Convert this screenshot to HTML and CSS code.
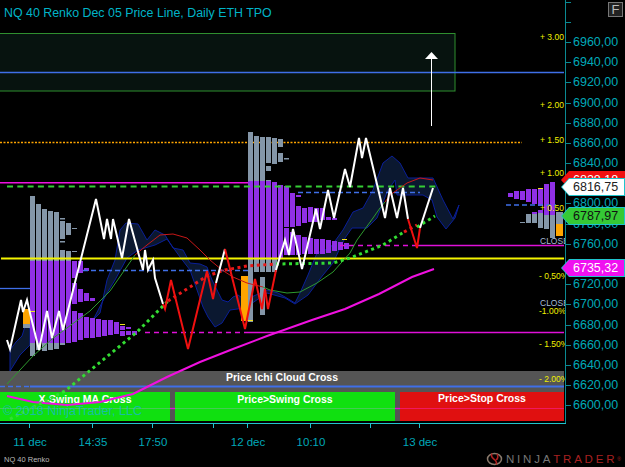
FILE: index.html
```html
<!DOCTYPE html>
<html lang="en">
<head>
    <meta charset="UTF-8">
    <title>NQ 40 Renko</title>
    <link rel="stylesheet" href="styles.css">
</head>
<body>
<div class="screen">
    <div class="chart-row">
        <div class="title">NQ 40 Renko Dec 05 Price Line, Daily ETH TPO</div>
        <div class="f-button">F</div>

        <!-- Plot area -->
        <svg class="plot" viewBox="0 0 565 423" width="565" height="423">
            <!-- target zone -->
            <rect class="zone" x="-2" y="33.5" width="457" height="57.5"/>

            <!-- bottom bands -->
            <rect class="band-grey" x="0" y="371" width="564" height="50"/>
            <rect class="band-green" x="0" y="392" width="170" height="29"/>
            <rect class="band-green" x="175" y="392" width="220" height="29"/>
            <rect class="band-red" x="400" y="392" width="164" height="29"/>
            <line class="faint-green" x1="0" y1="408.500" x2="170" y2="408.500"/>
            <line class="faint-green" x1="175" y1="408.500" x2="395" y2="408.500"/>
            <line class="faint-red" x1="400" y1="408.500" x2="564" y2="408.500"/>
            <line class="line-magenta-1" x1="170" y1="408.500" x2="175" y2="408.500"/>
            <line class="line-magenta-1" x1="395" y1="408.500" x2="400" y2="408.500"/>
            <text class="band-text" x="282" y="381">Price Ichi Cloud Cross</text>
            <text class="band-text" x="85" y="403">X-Swing MA Cross</text>
            <text class="band-text" x="285" y="403">Price&gt;Swing Cross</text>
            <text class="band-text" x="482" y="402">Price&gt;Stop Cross</text>

            <!-- levels behind the bars -->
            <line class="line-blue" x1="0" y1="72.500" x2="564" y2="72.500"/>
            <line class="line-orange" x1="0" y1="142.500" x2="522" y2="142.500"/>
            <line class="line-magenta" x1="0" y1="182.700" x2="248" y2="182.700"/>
            <line class="line-blue" x1="0" y1="288.500" x2="30" y2="288.500"/>

            <!-- ichimoku cloud -->
            <path class="cloud" d="M10 371V350L16 342L22 336L27 320L30 330V345L20 355Z"/>
            <path class="cloud" d="M93 320L100 313L107 280L115 260L120 230L126 223L138 224L147 240L155 230L165 235L173 248L183 250L190 263L200 264L207 267L212 280L222 300L228 302L233 297L238 295L245 300L267 290L278 293L285 297L295 303L300 293L308 275L317 253L330 248L343 230L353 212L363 208L373 190L383 163L392 156L400 163L408 178L433 178L443 200L453 219L459 205L455 218L446 229L437 217L432 200L423 195L397 195L395 180L387 192L377 218L367 228L352 228L345 238L340 248L333 263L323 275L308 295L295 304L285 298L267 293L245 308L230 310L222 323L215 327L208 317L203 307L190 270L180 257L167 239L155 245L138 250L127 258L115 280L107 293Z"/>

            <!-- profile bars -->
            <path class="bar-grey" d="M30 196h5v65h-5zM36 204h5v57h-5zM42 209h5v52h-5zM48 211h5v50h-5zM54 212h5v49h-5zM60 221h5v18h-5zM60 250h5v11h-5zM66 223h5v12h-5zM66 251h5v10h-5zM60 218h5v1.500h-5zM72 228h5v1h-5zM60 241h5v1.500h-5zM72 251h5v1h-5zM30 343h5v13h-5zM36 343h5v7h-5zM42 343h5v8h-5zM48 343h5v7h-5zM54 343h5v6h-5zM60 343h5v2h-5zM23 324h7v4h-7z"/>
            <path class="bar-purple" d="M30 261h5v82h-5zM36 261h5v82h-5zM42 261h5v82h-5zM48 261h5v82h-5zM54 261h5v82h-5zM60 261h5v82h-5zM66 261h5v82h-5zM72 261h5v17h-5zM72 283h5v21h-5zM72 311h5v31h-5zM78 261h5v12h-5zM78 289h5v13h-5zM78 313h5v27h-5zM84 268h5v3h-5zM84 293h5v8h-5zM84 317h5v21h-5zM90 298h5v3h-5zM90 318h5v20h-5zM96 319h5v18h-5zM102 320h5v16h-5zM108 320h5v15h-5zM114 322h5v12h-5zM120 326h5v4h-5zM120 331h5v5h-5zM126 327h5v2h-5zM126 331h5v4h-5zM132 331h5v4h-5z"/>
            <rect class="bar-orange" x="23" y="309" width="7" height="15"/>
            <path class="bar-grey" d="M248 132h5v49h-5zM254 136h5v45h-5zM260 137h5v44h-5zM266 137h5v26h-5zM266 166h5v5h-5zM266 180h5v1h-5zM272 138h5v26h-5zM278 139h5v8h-5zM278 153h5v9h-5zM284 158h5v1.500h-5zM248 258h5v64h-5zM254 258h5v14h-5zM260 258h5v14h-5zM266 258h5v14h-5zM272 258h5v14h-5zM260 277h5v38h-5z"/>
            <path class="bar-purple" d="M248 181h5v77h-5zM254 181h5v77h-5zM260 181h5v77h-5zM266 181h5v77h-5zM272 182h5v76h-5zM278 185h5v73h-5zM284 186h5v41h-5zM284 228h5v27h-5zM290 193h5v34h-5zM290 232h5v23h-5zM296 195h5v2h-5zM296 206h5v20h-5zM296 235h5v20h-5zM302 208h5v15h-5zM302 237h5v17h-5zM308 207h5v15h-5zM308 238h5v16h-5zM314 208h5v14h-5zM314 239h5v15h-5zM320 208h5v12h-5zM320 239h5v15h-5zM326 217h5v3h-5zM326 240h5v13h-5zM332 218h5v2h-5zM332 241h5v10h-5zM338 242h5v8h-5zM344 243h5v6h-5z"/>
            <rect class="bar-orange" x="241" y="276" width="7" height="45"/>
            <path class="bar-grey" d="M520 222h5v1h-5zM526 214h5v9h-5zM532 213h5v10h-5zM538 213h5v15h-5zM544 215h5v14h-5zM550 215h5v23h-5zM556 212h7v12h-7z"/>
            <path class="bar-purple" d="M508 193h5v4h-5zM514 191h5v8h-5zM520 191h5v9h-5zM526 189h5v13h-5zM532 189h5v15h-5zM538 189h5v17h-5zM544 184h5v31h-5zM550 182h5v33h-5zM532 212h5v2h-5zM538 210h5v3h-5z"/>
            <rect class="bar-orange" x="556" y="224" width="7" height="12"/>
            <path class="tick-yellow" d="M30 311.500h5M120 324.500h5M538 188.500h5M342 239.500h5M248 320.500h5"/>

            <!-- level lines over the bars -->
            <line class="line-green-dash" x1="7" y1="186.500" x2="437" y2="186.500"/>
            <line class="line-blue-dash" x1="298" y1="192.500" x2="420" y2="192.500"/>
            <line class="line-blue-dash" x1="506" y1="205" x2="556" y2="205"/>
            <line class="line-blue-dash" x1="83" y1="270.500" x2="248" y2="270.500"/>
            <line class="line-blue-dash" x1="0" y1="386.500" x2="30" y2="386.500"/>
            <line class="line-blue-thick" x1="30" y1="386.500" x2="564" y2="386.500"/>
            <line class="line-magenta-dash" x1="340" y1="245.500" x2="415" y2="245.500"/>
            <line class="line-magenta-1" x1="415" y1="245.500" x2="564" y2="245.500"/>
            <line class="line-magenta-dash" x1="145" y1="332.500" x2="248" y2="332.500"/>
            <line class="line-magenta-1" x1="248" y1="332.500" x2="564" y2="332.500"/>
            <line class="line-yellow" x1="1" y1="258.500" x2="564" y2="258.500"/>

            <!-- moving averages -->
            <polyline class="ma-green" points="7,384 33,356 52,339 90,311 110,291 135,255"/>
            <polyline class="ma-red" points="135,255 147,245 160,235 173,234 187,238 200,250 210,260 222,270 233,277 247,283 263,287"/>
            <polyline class="ma-green" points="263,287 270,290 287,293 300,292 317,283 333,272 350,253 357,240 373,218 380,208 385,202"/>
            <polyline class="ma-red" points="385,202 390,195 407,183 420,178 433,180"/>
            <polyline class="ma-magenta" points="7,396 33,402 67,405 100,402 133,394 167,377 200,362 233,349 267,336 312,320 345,309 379,294 412,277 434,269"/>

            <!-- swing dots -->
            <polyline class="dots-green" points="10,419 65,391 137,332 163,306 168,301"/>
            <polyline class="dots-red" points="168,301 190,287 207,276 225,270 247,266 276,264"/>
            <polyline class="dots-green" points="276,264 333,263 350,258 383,245 404,232"/>
            <polyline class="dots-red" points="404,232 417,225"/>
            <polyline class="dots-green" points="417,227 435,216"/>

            <!-- price line -->
            <polyline class="price-white" points="7,340 10,349 21,300 23,312 27,300 30,313 39,350 47,311 52,338 59,311 63,330 96,199 104,239 107,219 111,239 113,219 122,258 129,219 143,270 145,250 148,270 153,260 155,278 163,304"/>
            <polyline class="price-red" points="163,304 165,309 171,280 188,349 207,271 213,299 216,283"/>
            <polyline class="price-white" points="216,283 225,249"/>
            <polyline class="price-red" points="225,249 245,329 255,279 262,309 265,289 268,309 276,270"/>
            <polyline class="price-white" points="276,270 285,240 289,255 293,229 302,269 316,209 320,229 328,190 334,218 345,169 350,187 359,138 362,158 366,138 385,218 390,188 397,218 403,188 408,219"/>
            <polyline class="price-red" points="408,219 417,248 420,228"/>
            <polyline class="price-white" points="420,228 433,188"/>

            <!-- arrow -->
            <line class="arrow-line" x1="431.500" y1="58" x2="431.500" y2="126"/>
            <polygon class="arrow-head" points="431.500,52 438,59 425,59"/>

            <!-- percent labels -->
            <text class="pct" x="540" y="40">+ 3.00</text>
            <text class="pct" x="540" y="108">+ 2.00</text>
            <text class="pct" x="540" y="143">+ 1.50</text>
            <text class="pct" x="540" y="176">+ 1.00</text>
            <text class="pct" x="540" y="211">+ 0.50</text>
            <text class="close" x="540" y="244">CLOSE</text>
            <text class="pct" x="539" y="279">- 0,50%</text>
            <text class="close" x="540" y="306">CLOSE</text>
            <text class="pct" x="539" y="314">-1.00%</text>
            <text class="pct" x="539" y="347">- 1.50%</text>
            <text class="pct" x="539" y="382">- 2.00%</text>

            <text class="copyright" x="3" y="415">© 2018 NinjaTrader, LLC</text>
        </svg>

        <!-- Price axis -->
        <div class="price-axis">
            <div class="price-row"></div>
            <div class="price-row"></div>
            <div class="price-row">6960,00</div>
            <div class="price-row">6940,00</div>
            <div class="price-row">6920,00</div>
            <div class="price-row">6900,00</div>
            <div class="price-row">6880,00</div>
            <div class="price-row">6860,00</div>
            <div class="price-row">6840,00</div>
            <div class="price-row">6820,00</div>
            <div class="price-row">6800,00</div>
            <div class="price-row">6780,00</div>
            <div class="price-row">6760,00</div>
            <div class="price-row">6740,00</div>
            <div class="price-row">6720,00</div>
            <div class="price-row">6700,00</div>
            <div class="price-row">6680,00</div>
            <div class="price-row">6660,00</div>
            <div class="price-row">6640,00</div>
            <div class="price-row">6620,00</div>
            <div class="price-row">6600,00</div>
        </div>

        <!-- Price tags -->
        <div class="price-tag tag-red"><span>6828,18</span></div>
        <div class="price-tag tag-white"><span>6816,75</span></div>
        <div class="price-tag tag-green"><span>6787,97</span></div>
        <div class="price-tag tag-magenta"><span>6735,32</span></div>
    </div>

    <!-- Time axis -->
    <svg class="time-axis" viewBox="0 0 566 27" width="566" height="27">
        <path class="time-ticks" d="M29.500 0v4M92.500 0v4M152.500 0v4M213.500 0v4M247.500 0v4M310.500 0v4M370.500 0v4M419.500 0v4"/>
        <text class="time-label" x="30" y="22">11 dec</text>
        <text class="time-label" x="93" y="22">14:35</text>
        <text class="time-label" x="153" y="22">17:50</text>
        <text class="time-label" x="248" y="22">12 dec</text>
        <text class="time-label" x="311" y="22">10:10</text>
        <text class="time-label" x="420" y="22">13 dec</text>
    </svg>

    <footer class="footer">
        <span class="instrument">NQ 40 Renko</span>
        <div class="logo">
            <svg class="logo-mark" viewBox="0 0 17 14" width="17" height="14">
                <ellipse class="logo-ring" cx="8.500" cy="7" rx="7" ry="5.500"/>
                <path class="logo-swirl" d="M6 1.500C4 5 7 6 9 8C10.500 9.500 11 11 10 12.500"/>
                <path class="logo-swirl" d="M11 2C12.500 5 11.500 7 10 8"/>
            </svg>
            <span class="logo-ninja">NINJA</span><span class="logo-trader">TRADER</span><sup class="logo-reg">®</sup>
        </div>
    </footer>
</div>
</body>
</html>
```
FILE: styles.css
```css
/* Page */
body {
    margin: 0;
    background-color: #000;
    font-family: "Liberation Sans", Arial, sans-serif;
}

.screen {
    width: 625px;
    height: 467px;
    overflow: hidden;
    display: flex;
    flex-direction: column;
    background-color: #000;
}

.chart-row {
    position: relative;
    display: flex;
    height: 423px;
    border-bottom: 1px solid #1fc4cc;
    box-sizing: content-box;
    margin-right: 59px;
}

.title {
    position: absolute;
    left: 4px;
    top: 6px;
    font-size: 12.400px;
    color: #00b4c8;
    white-space: nowrap;
}

.f-button {
    position: absolute;
    left: 608px;
    top: 2px;
    width: 13px;
    height: 13px;
    border: 1px solid #777;
    background-color: #222;
    color: #bbb;
    font-size: 13px;
    line-height: 13px;
    text-align: center;
}

.plot {
    display: block;
    flex: none;
}

/* Zone and bands */
.zone {
    fill: #07130f;
    stroke: #2f8f2f;
    stroke-width: 1;
}

.band-grey { fill: #555; }
.band-green { fill: #10e010; }
.band-red { fill: #e01010; }

.faint-green { stroke: #44cc55; stroke-width: 1; }
.faint-red { stroke: #f01860; stroke-width: 1; }

.band-text {
    fill: #fff;
    font-size: 10.500px;
    font-weight: bold;
    text-anchor: middle;
}

.copyright {
    fill: #18b8c0;
    fill-opacity: 0.85;
    font-size: 12.600px;
}

/* Level lines */
.line-blue { stroke: #3f6fe8; stroke-width: 1.300; }
.line-blue-thick { stroke: #3f6fe8; stroke-width: 1.800; }
.line-orange { stroke: #ffa500; stroke-width: 1.300; stroke-dasharray: 2 1.500; }
.line-magenta { stroke: #f010e0; stroke-width: 1.500; }
.line-magenta-1 { stroke: #e010d8; stroke-width: 1.300; }
.line-magenta-dash { stroke: #e010d8; stroke-width: 1.300; stroke-dasharray: 5 4; }
.line-green-dash { stroke: #35cc35; stroke-width: 2.200; stroke-dasharray: 6 4.300; }
.line-blue-dash { stroke: #3f6fe8; stroke-width: 1.500; stroke-dasharray: 5 3; }
.line-yellow { stroke: #f4f400; stroke-width: 1.800; }

/* Cloud */
.cloud {
    fill: #0b1830;
    stroke: #0a1f98;
    stroke-width: 1;
}

/* Profile bars */
.bar-grey { fill: #8496a8; }
.bar-purple { fill: #9030e6; }
.bar-orange { fill: #ffa500; }
.tick-yellow { stroke: #f0e020; stroke-width: 1; fill: none; }

/* Lines of the chart */
polyline { fill: none; }

.ma-green { stroke: #2e9a2e; stroke-width: 1; }
.ma-red { stroke: #c81818; stroke-width: 1; }
.ma-magenta { stroke: #f010e0; stroke-width: 2; }

.dots-green,
.dots-red {
    stroke-width: 3;
    stroke-dasharray: 3 3.500;
}

.dots-green { stroke: #33dd33; }
.dots-red { stroke: #e81818; }

.price-white,
.price-red {
    stroke-width: 2;
    stroke-linejoin: miter;
}

.price-white { stroke: #fff; }
.price-red { stroke: #f01010; }

.arrow-line { stroke: #fff; stroke-width: 1; }
.arrow-head { fill: #fff; }

.pct {
    fill: #f0f000;
    font-size: 8.500px;
}

.close {
    fill: #a8bcd8;
    font-size: 8.500px;
}

/* Price axis */
.price-axis {
    position: absolute;
    left: 565px;
    top: 0;
    width: 58px;
    height: 423px;
    overflow: hidden;
    border-left: 1.500px solid #0b8a92;
}

.price-row {
    position: relative;
    height: 20.200px;
    line-height: 20.200px;
    padding-left: 7px;
    font-size: 12.500px;
    color: #00a8b8;
}

.price-row:first-child {
    margin-top: -8.400px;
}

.price-row::before {
    content: "";
    position: absolute;
    left: 0;
    top: 10px;
    width: 5px;
    height: 1px;
    background-color: #0b8a92;
}

/* Price tags */
.price-tag {
    position: absolute;
    left: 561px;
    width: 64px;
    height: 18px;
    background-color: #1fc4cc;
    clip-path: polygon(8px 0, 100% 0, 100% 100%, 8px 100%, 0 50%);
}

.price-tag span {
    display: block;
    height: 16px;
    margin: 1px;
    padding-left: 11px;
    line-height: 16px;
    font-size: 12.500px;
    clip-path: polygon(7px 0, 100% 0, 100% 100%, 7px 100%, 0 50%);
}

.tag-red { top: 171px; background-color: #f01010; }
.tag-red span { background-color: #f01010; color: #fff; }
.tag-white { top: 178px; }
.tag-white span { background-color: #fff; color: #222; }
.tag-green { top: 207px; }
.tag-green span { background-color: #35c935; color: #111; }
.tag-magenta { top: 259px; }
.tag-magenta span { background-color: #f010f0; color: #fff; }

/* Time axis */
.time-axis {
    display: block;
    flex: none;
}

.time-ticks {
    stroke: #1fc4cc;
    stroke-width: 1;
    fill: none;
}

.time-label {
    fill: #00a8b8;
    font-size: 11.500px;
    text-anchor: middle;
}

/* Footer */
.footer {
    flex: 1;
    display: flex;
    justify-content: space-between;
    align-items: center;
    padding: 0 4px 0 4px;
}

.instrument {
    font-size: 7.500px;
    color: #bbb;
}

.logo {
    display: flex;
    align-items: center;
    font-size: 11.500px;
    letter-spacing: 2.800px;
    white-space: nowrap;
}

.logo-mark {
    margin-right: 3px;
}

.logo-ring {
    fill: none;
    stroke: #8a7a6c;
    stroke-width: 1.500;
}

.logo-swirl {
    fill: none;
    stroke: #b02020;
    stroke-width: 1.500;
}

.logo-ninja { color: #777; }
.logo-trader { color: #a82020; }

.logo-reg {
    font-size: 5px;
    letter-spacing: 0;
    color: #a82020;
}
```
